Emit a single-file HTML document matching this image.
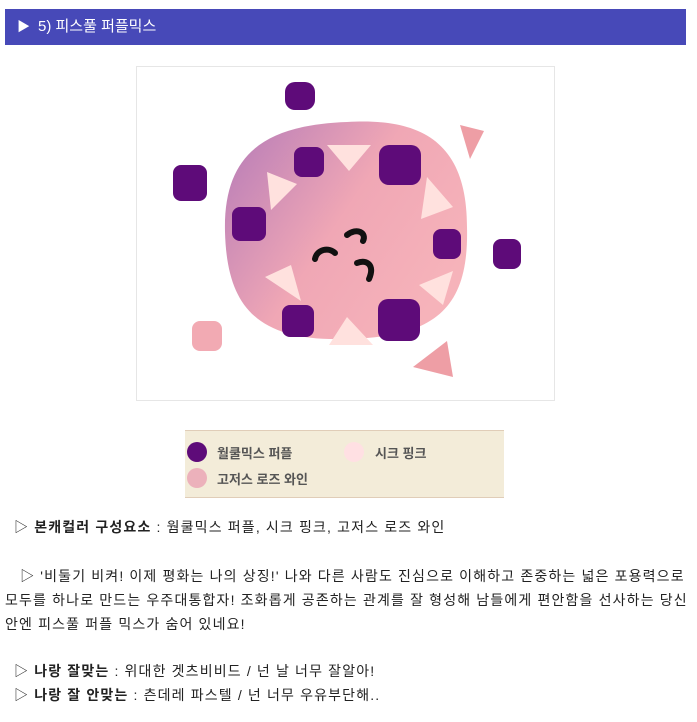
<!DOCTYPE html>
<html><head><meta charset="utf-8"><style>
body{margin:0;background:#fff;font-family:"Liberation Sans","Noto Sans CJK KR",sans-serif;color:#222;}
.h{position:absolute;left:5px;top:9px;width:681px;height:36px;background:#4749b8;color:#fff;font-size:15px;line-height:36px;}
.h span{position:absolute;left:12px;top:0;font-size:13px}
.h b{position:absolute;left:33px;font-weight:normal}
.img{position:absolute;left:136px;top:66px;width:417px;height:333px;border:1px solid #e6e6e6;}
.leg{position:absolute;left:185px;top:430px;width:319px;height:68px;background:#f3ecd9;border-top:1px solid #e0cdb8;border-bottom:1px solid #e0cdb8;box-sizing:border-box;font-size:13px;font-weight:bold;color:#555;}
.leg i{position:absolute;width:20px;height:20px;border-radius:50%}
.leg s{position:absolute;text-decoration:none}
p{position:absolute;left:14px;margin:0;font-size:14px;line-height:24px;white-space:nowrap;letter-spacing:1.15px}
</style></head><body>
<div class="h"><span>▶</span><b>5) 피스풀 퍼플믹스</b></div>
<div class="img"><svg width="417" height="333" viewBox="0 0 417 333">
<defs><linearGradient id="g" x1="0" y1="0" x2="1" y2="0.6"><stop offset="0" stop-color="#b47ab8"/><stop offset="0.55" stop-color="#f0a7b5"/><stop offset="1" stop-color="#f6b3ba"/></linearGradient></defs>
<path d="M210 55 C290 50 330 80 330 160 C332 240 300 270 210 272 C120 275 90 240 88 165 C86 85 130 58 210 55Z" fill="url(#g)"/>
<rect x="148" y="15" width="30" height="28" rx="10" fill="#5e0b79"/>
<rect x="36" y="98" width="34" height="36" rx="8" fill="#5e0b79"/>
<rect x="356" y="172" width="28" height="30" rx="8" fill="#5e0b79"/>
<rect x="55" y="254" width="30" height="30" rx="8" fill="#f2aab3"/>
<path d="M323 58l24 6-14 28z" fill="#ee9ea5"/>
<path d="M276 300l34-26 6 36z" fill="#ee9ea5"/>
<rect x="157" y="80" width="30" height="30" rx="8" fill="#5e0b79"/>
<rect x="242" y="78" width="42" height="40" rx="10" fill="#5e0b79"/>
<rect x="95" y="140" width="34" height="34" rx="8" fill="#5e0b79"/>
<rect x="296" y="162" width="28" height="30" rx="8" fill="#5e0b79"/>
<rect x="145" y="238" width="32" height="32" rx="8" fill="#5e0b79"/>
<rect x="241" y="232" width="42" height="42" rx="10" fill="#5e0b79"/>
<g fill="#ffe1de"><path d="M190 78h44l-22 26z"/><path d="M130 105l30 12-26 26z"/><path d="M290 110l26 30-32 12z"/><path d="M128 210l26-12 10 36z"/><path d="M282 218l34-14-10 34z"/><path d="M210 250l26 28h-44z"/></g>
<g fill="none" stroke="#111" stroke-width="6" stroke-linecap="round"><path d="M210 168c10-8 20-2 16 6"/><path d="M178 192c2-10 14-12 20-6"/><path d="M220 196c10-4 18 2 12 16"/></g>
</svg></div>
<div class="leg"><i style="left:2px;top:11px;background:#5e0b79"></i><s style="left:32px;top:12px">월쿨믹스 퍼플</s>
<i style="left:159px;top:11px;background:#ffe0e3"></i><s style="left:190px;top:12px">시크 핑크</s>
<i style="left:2px;top:37px;background:#ecb1bb"></i><s style="left:32px;top:38px">고저스 로즈 와인</s></div>
<p style="top:515px">▷ <b>본캐컬러 구성요소</b> : 웜쿨믹스 퍼플, 시크 핑크, 고저스 로즈 와인</p>
<p style="top:564px;left:5px">&nbsp;&nbsp; ▷ '비둘기 비켜! 이제 평화는 나의 상징!' 나와 다른 사람도 진심으로 이해하고 존중하는 넓은 포용력으로<br>모두를 하나로 만드는 우주대통합자! 조화롭게 공존하는 관계를 잘 형성해 남들에게 편안함을 선사하는 당신<br>안엔 피스풀 퍼플 믹스가 숨어 있네요!</p>
<p style="top:659px">▷ <b>나랑 잘맞는</b> : 위대한 겟츠비비드 / 넌 날 너무 잘알아!</p>
<p style="top:683px">▷ <b>나랑 잘 안맞는</b> : 츤데레 파스텔 / 넌 너무 우유부단해..</p>
</body></html>
